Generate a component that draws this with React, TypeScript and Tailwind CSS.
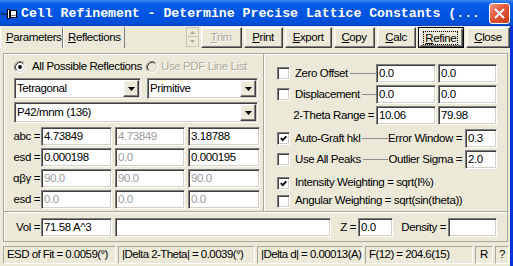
import clsx from 'clsx';

const bevelIn =
  'border border-t-[#808080] border-l-[#808080] border-r-white border-b-white shadow-[inset_1px_1px_0_#404040,inset_-1px_-1px_0_#d4d0c8]';
const bevelOut =
  'border border-t-white border-l-white border-r-[#404040] border-b-[#404040] shadow-[inset_-1px_-1px_0_#808080,inset_1px_1px_0_#f4f3ee]';

const Mn = ({ children }: { children: string }) => <span className="underline underline-offset-[1px]">{children}</span>;

const Field = ({ className, value, muted }: { className?: string; value?: string; muted?: boolean }) => (
  <div
    className={clsx(
      'h-[19px] shrink-0 bg-white flex items-center pl-[2px] leading-none whitespace-nowrap overflow-hidden',
      bevelIn,
      muted ? 'text-[#9a9a9a]' : 'text-black',
      className
    )}
  >
    {value}
  </div>
);

const Combo = ({ className, value }: { className?: string; value: string }) => (
  <div className={clsx('h-[21px] shrink-0 bg-white flex items-center', bevelIn, className)}>
    <span className="flex-1 pl-[2px] whitespace-nowrap overflow-hidden">{value}</span>
    <div className={clsx('w-[16px] h-[17px] mr-[1px] bg-[#ece9d8] flex items-center justify-center', bevelOut)}>
      <svg width="7" height="4" viewBox="0 0 7 4">
        <path d="M0 0h7L3.5 4z" fill="#000" />
      </svg>
    </div>
  </div>
);

const Check = ({ checked }: { checked?: boolean }) => (
  <div className={clsx('w-[13px] h-[13px] shrink-0 bg-white flex items-center justify-center', bevelIn)}>
    {checked && (
      <svg width="7" height="7" viewBox="0 0 7 7">
        <path d="M0.8 3.2 L2.7 5.2 L6.3 1.4" stroke="#000" strokeWidth="1.8" fill="none" />
      </svg>
    )}
  </div>
);

const Radio = ({ checked, disabled }: { checked?: boolean; disabled?: boolean }) => (
  <svg width="12" height="12" viewBox="0 0 12 12" className="shrink-0">
    <circle cx="6" cy="6" r="5" fill={disabled ? '#ece9d8' : '#fff'} />
    <path d="M2.11 9.89 A5.5 5.5 0 0 1 9.89 2.11" stroke="#808080" fill="none" />
    <path d="M2.82 9.18 A4.5 4.5 0 0 1 9.18 2.82" stroke="#404040" fill="none" />
    <path d="M9.89 2.11 A5.5 5.5 0 0 1 2.11 9.89" stroke="#fff" fill="none" />
    <path d="M9.18 2.82 A4.5 4.5 0 0 1 2.82 9.18" stroke="#d4d0c8" fill="none" />
    {checked && <circle cx="6" cy="6" r="1.9" fill="#000" />}
  </svg>
);

const Btn = ({ className, children, disabled }: { className?: string; children: React.ReactNode; disabled?: boolean }) => (
  <div
    className={clsx(
      'h-[21px] shrink-0 flex items-center justify-center',
      bevelOut,
      disabled && 'text-[#aca899] [text-shadow:1px_1px_0_#fff]',
      className
    )}
  >
    {children}
  </div>
);

const Line = () => <div className="flex-1 h-px bg-[#8c8c8c] self-center" />;

const TitleBar = () => (
  <div className="h-[26px] shrink-0 flex items-center bg-[linear-gradient(180deg,#3d8af7_0%,#0a5fe8_14%,#0054e3_50%,#0050dc_85%,#0046c4_100%)]">
    <svg width="17" height="10" viewBox="0 0 17 10" className="ml-[1px] mt-[2px]">
      <path d="M0 5h6" stroke="#000" />
      <rect x="6.5" y="0.5" width="2" height="9" fill="#fff" stroke="#000" />
      <rect x="9.5" y="1.5" width="6" height="7" fill="#fff" stroke="#000" />
      <path d="M10 6.5h5" stroke="#808080" />
    </svg>
    <span className="ml-[3px] mt-[2px] font-['Liberation_Mono',monospace] font-bold text-[13.2px] tracking-normal text-white whitespace-nowrap">
      Cell Refinement - Determine Precise Lattice Constants (...
    </span>
    <div className="ml-auto mr-[3px] w-[21px] h-[21px] rounded-[3px] border border-white bg-[linear-gradient(135deg,#f09a80_0%,#e2583a_45%,#c63c18_100%)] flex items-center justify-center">
      <svg width="11" height="11" viewBox="0 0 11 11">
        <path d="M1 1 L10 10 M10 1 L1 10" stroke="#fff" strokeWidth="2" />
      </svg>
    </div>
  </div>
);

const Toolbar = () => (
  <div className="h-[22px] shrink-0 pt-[1px] flex items-start">
    <div className="w-[65px] h-[21px] flex items-center pl-[5px] border-l border-white border-r border-r-[#808080]">
      <Mn>P</Mn>arameters
    </div>
    <div className="w-[64px] h-[21px] flex items-center pl-[4px] border-l border-white border-r border-r-[#808080]">
      <Mn>R</Mn>eflections
    </div>
    <div className="ml-[61px] w-[13px] h-[20px] flex flex-col">
      <div className="h-[10px] border border-[#c8c5b5] flex items-center justify-center">
        <svg width="5" height="3" viewBox="0 0 5 3">
          <path d="M0 3h5L2.5 0z" fill="#aca899" />
        </svg>
      </div>
      <div className="h-[10px] border border-[#c8c5b5] border-t-0 flex items-center justify-center">
        <svg width="5" height="3" viewBox="0 0 5 3">
          <path d="M0 0h5L2.5 3z" fill="#aca899" />
        </svg>
      </div>
    </div>
    <Btn disabled className="ml-[2px] w-[41px]">
      <Mn>T</Mn>rim
    </Btn>
    <Btn className="ml-[2px] w-[39px]">
      <Mn>P</Mn>rint
    </Btn>
    <Btn className="ml-[2px] w-[47px]">
      <Mn>E</Mn>xport
    </Btn>
    <Btn className="ml-[2px] w-[41px]">
      <Mn>C</Mn>opy
    </Btn>
    <Btn className="ml-[2px] w-[39px]">
      <Mn>C</Mn>alc
    </Btn>
    <div className="ml-[2px] w-[48px] h-[21px] border border-black">
      <div className={clsx('w-full h-full flex items-center justify-center', bevelOut)}>
        <span className="border border-dotted border-black px-[1px] leading-[12px]">
          <Mn>R</Mn>efine
        </span>
      </div>
    </div>
    <Btn className="ml-[2px] w-[44px]">
      <Mn>C</Mn>lose
    </Btn>
  </div>
);

const LeftPane = () => (
  <div className="w-[259px] shrink-0 flex flex-col">
    <div className="mt-[7px] h-[12px] flex items-center">
      <div className="ml-[10px]">
        <Radio checked />
      </div>
      <span className="ml-[6px] w-[114px] whitespace-nowrap">All Possible Reflections</span>
      <Radio disabled />
      <span className="ml-[3px] whitespace-nowrap text-[#aca899] [text-shadow:1px_1px_0_#fff]">Use PDF Line List</span>
    </div>
    <div className="mt-[5px] flex">
      <Combo className="ml-[10px] w-[127px]" value="Tetragonal" />
      <Combo className="ml-[6px] w-[111px]" value="Primitive" />
    </div>
    <Combo className="mt-[3px] ml-[10px] w-[244px]" value="P42/mnm (136)" />
    <div className="mt-[4px] flex flex-col gap-[2px]">
      {[
        ['abc =', '4.73849', '4.73849', '3.18788', false],
        ['esd =', '0.000198', '0.0', '0.000195', false],
        ['αβγ =', '90.0', '90.0', '90.0', true],
        ['esd =', '0.0', '0.0', '0.0', true],
      ].map(([label, a, b, c, muted], i) => (
        <div key={i} className="h-[19px] flex items-center">
          <span className="w-[37px] text-right pr-[1px] whitespace-nowrap">{label as string}</span>
          <Field className="w-[71px]" value={a as string} muted={muted as boolean} />
          <Field className="ml-[3px] w-[70px]" value={b as string} muted />
          <Field className="ml-[3px] w-[72px]" value={c as string} muted={muted as boolean} />
        </div>
      ))}
    </div>
  </div>
);

const RightPane = () => (
  <div className="flex-1 border-l border-[#aca899] shadow-[inset_1px_0_0_#fff] pt-[9px] pl-[13px] pr-[10px] flex flex-col">
    <div className="h-[21px] flex items-center">
      <Check />
      <span className="ml-[5px] mr-[2px] whitespace-nowrap">Zero Offset</span>
      <Line />
      <Field className="w-[60px]" value="0.0" />
      <Field className="ml-[2px] w-[59px]" value="0.0" />
    </div>
    <div className="h-[21px] flex items-center">
      <Check />
      <span className="ml-[5px] mr-[2px] whitespace-nowrap">Displacement</span>
      <Line />
      <Field className="w-[60px]" value="0.0" />
      <Field className="ml-[2px] w-[59px]" value="0.0" />
    </div>
    <div className="h-[21px] flex items-center">
      <span className="flex-1 text-right pr-[2px] whitespace-nowrap">2-Theta Range =</span>
      <Field className="w-[60px]" value="10.06" />
      <Field className="ml-[2px] w-[59px]" value="79.98" />
    </div>
    <div className="mt-[2px] h-[21px] flex items-center">
      <Check checked />
      <span className="ml-[5px] mr-[2px] whitespace-nowrap">Auto-Graft hkl</span>
      <Line />
      <span className="whitespace-nowrap">Error Window =</span>
      <Field className="ml-[3px] w-[32px]" value="0.3" />
    </div>
    <div className="h-[21px] flex items-center">
      <Check />
      <span className="ml-[5px] mr-[2px] whitespace-nowrap">Use All Peaks</span>
      <Line />
      <span className="whitespace-nowrap">Outlier Sigma =</span>
      <Field className="ml-[3px] w-[32px]" value="2.0" />
    </div>
    <div className="mt-[4px] h-[18px] flex items-center">
      <Check checked />
      <span className="ml-[5px] whitespace-nowrap">Intensity Weighting = sqrt(I%)</span>
    </div>
    <div className="h-[18px] flex items-center">
      <Check />
      <span className="ml-[5px] whitespace-nowrap">Angular Weighting = sqrt(sin(theta))</span>
    </div>
  </div>
);

const StatusCell = ({ className, children, center }: { className?: string; children: string; center?: boolean }) => (
  <div
    className={clsx(
      'h-[18px] shrink-0 flex items-center whitespace-nowrap overflow-hidden tracking-[-0.55px] border border-t-[#aca899] border-l-[#aca899] border-r-white border-b-white',
      center ? 'justify-center' : 'pl-[3px]',
      className
    )}
  >
    {children}
  </div>
);

export default function App() {
  return (
    <div className="w-[513px] h-[266px] bg-[#ece9d8] flex flex-col overflow-hidden font-['Liberation_Sans',Arial,sans-serif] text-[11.5px] tracking-[-0.4px] text-black select-none">
      <TitleBar />
      <div className="flex flex-1 min-h-0">
        <div className="w-[510px] flex flex-col">
          <Toolbar />
          <div className="mt-[5px] ml-[3px] w-[505px] h-[189px] border border-[#aca899] shadow-[inset_1px_1px_0_#fff] flex flex-col">
            <div className="h-[157px] flex">
              <LeftPane />
              <RightPane />
            </div>
            <div className="flex-1 border-t border-[#aca899] shadow-[inset_0_1px_0_#fff] pt-[6px] pr-[10px] flex items-start">
              <span className="w-[37px] h-[19px] flex items-center justify-end pr-[1px]">Vol =</span>
              <Field className="w-[71px]" value="71.58 A^3" />
              <Field className="ml-[3px] w-[216px]" />
              <span className="w-[27px] h-[19px] flex items-center justify-end pr-[2px]">Z =</span>
              <Field className="w-[35px]" value="0.0" />
              <span className="flex-1 h-[19px] flex items-center justify-end pr-[2px]">Density =</span>
              <Field className="w-[49px]" />
            </div>
          </div>
          <div className="mt-[4px] flex">
            <StatusCell className="ml-[3px] w-[113px]">ESD of Fit = 0.0059(°)</StatusCell>
            <StatusCell className="ml-[2px] w-[137px]">|Delta 2-Theta| = 0.0039(°)</StatusCell>
            <StatusCell className="ml-[2px] w-[106px]">|Delta d| = 0.00013(A)</StatusCell>
            <StatusCell className="ml-[2px] w-[108px]">F(12) = 204.6(15)</StatusCell>
            <StatusCell center className="ml-[2px] w-[18px]">R</StatusCell>
            <StatusCell center className="ml-[2px] w-[14px]">?</StatusCell>
          </div>
        </div>
        <div className="w-[3px] bg-[#0831d9]" />
      </div>
    </div>
  );
}
